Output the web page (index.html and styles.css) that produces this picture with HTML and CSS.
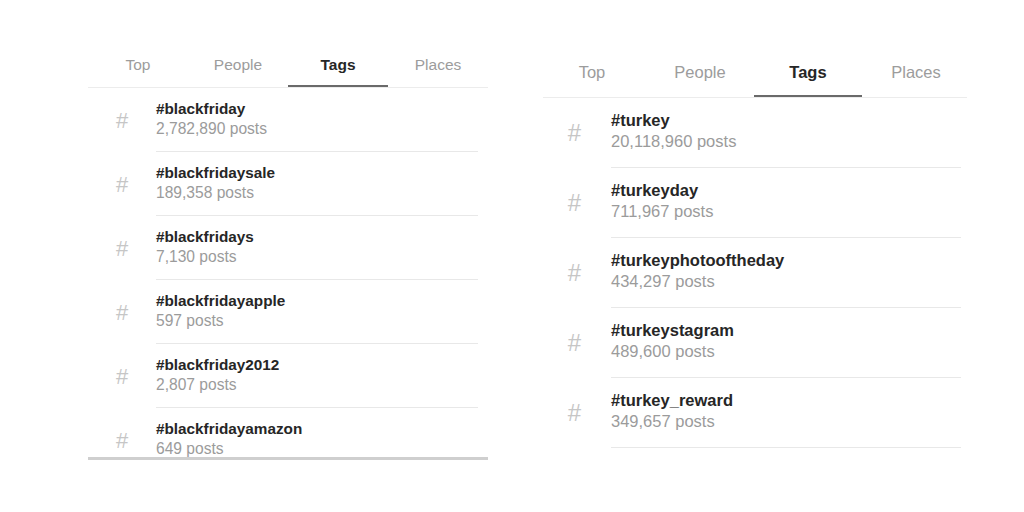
FILE: index.html
```html
<!DOCTYPE html>
<html>
<head>
<meta charset="utf-8">
<link rel="stylesheet" href="styles.css">
</head>
<body>
<div class="page">
  <section class="panel panel-left">
    <nav class="tabs">
      <div class="tab">Top</div>
      <div class="tab">People</div>
      <div class="tab active">Tags</div>
      <div class="tab">Places</div>
    </nav>
    <div class="list">
      <div class="row"><div class="hash">#</div><div class="info"><div class="name">#blackfriday</div><div class="count">2,782,890 posts</div></div></div>
      <div class="row"><div class="hash">#</div><div class="info"><div class="name">#blackfridaysale</div><div class="count">189,358 posts</div></div></div>
      <div class="row"><div class="hash">#</div><div class="info"><div class="name">#blackfridays</div><div class="count">7,130 posts</div></div></div>
      <div class="row"><div class="hash">#</div><div class="info"><div class="name">#blackfridayapple</div><div class="count">597 posts</div></div></div>
      <div class="row"><div class="hash">#</div><div class="info"><div class="name">#blackfriday2012</div><div class="count">2,807 posts</div></div></div>
      <div class="row"><div class="hash">#</div><div class="info"><div class="name">#blackfridayamazon</div><div class="count">649 posts</div></div></div>
    </div>
  </section>
  <section class="panel panel-right">
    <nav class="tabs">
      <div class="tab">Top</div>
      <div class="tab">People</div>
      <div class="tab active">Tags</div>
      <div class="tab">Places</div>
    </nav>
    <div class="list">
      <div class="row"><div class="hash">#</div><div class="info"><div class="name">#turkey</div><div class="count">20,118,960 posts</div></div></div>
      <div class="row"><div class="hash">#</div><div class="info"><div class="name">#turkeyday</div><div class="count">711,967 posts</div></div></div>
      <div class="row"><div class="hash">#</div><div class="info"><div class="name">#turkeyphotooftheday</div><div class="count">434,297 posts</div></div></div>
      <div class="row"><div class="hash">#</div><div class="info"><div class="name">#turkeystagram</div><div class="count">489,600 posts</div></div></div>
      <div class="row"><div class="hash">#</div><div class="info"><div class="name">#turkey_reward</div><div class="count">349,657 posts</div></div></div>
    </div>
  </section>
</div>
</body>
</html>
```
FILE: styles.css
```css
* { box-sizing: border-box; }
html, body {
  margin: 0;
  padding: 0;
  background: #ffffff;
  font-family: "Liberation Sans", Arial, sans-serif;
  color: #262626;
}
.page {
  display: flex;
  align-items: flex-start;
  padding-left: 88px;
  gap: 50px;
  width: 1024px;
  height: 512px;
}
.panel { display: flex; flex-direction: column; }
.tabs {
  display: flex;
  border-bottom: 1px solid #ececec;
}
.tab {
  flex: 1;
  display: flex;
  align-items: center;
  justify-content: center;
  color: #9c9c9c;
}
.tab.active {
  color: #262626;
  font-weight: bold;
  box-shadow: inset 0 -2px 0 #6a6a6a;
}
.row { display: flex; }
.hash {
  display: flex;
  align-items: center;
  justify-content: center;
  color: #c6c6c6;
}
.info {
  flex: 1;
  display: flex;
  flex-direction: column;
  justify-content: center;
  border-bottom: 1px solid #e8e8e8;
}
.name { font-weight: bold; color: #262626; line-height: 20px; }
.count { color: #9b9b9b; line-height: 20px; }

/* left panel */
.panel-left { width: 400px; margin-top: 43px; }
.panel-left .tabs { height: 45px; font-size: 15.5px; }
.panel-left .list {
  height: 372px;
  overflow: hidden;
  border-bottom: 3px solid #cfcfcf;
}
.panel-left .row { height: 64px; }
.panel-left .hash { width: 68px; font-size: 22px; padding-top: 1px; }
.panel-left .info { margin-right: 10px; padding-bottom: 2px; }
.panel-left .name { font-size: 15.3px; }
.panel-left .count { font-size: 15.6px; }

/* right panel */
.panel-right { width: 432px; margin-top: 47px; }
.panel-right .tabs { height: 51px; font-size: 16.5px; margin-left: 5px; margin-right: 3px; }
.panel-right .tabs .tab:first-child { margin-left: -5px; }
.panel-right .tabs .tab:last-child { margin-right: -3px; }
.panel-right .row { height: 70px; }
.panel-right .hash { width: 73px; font-size: 24px; }
.panel-right .info { margin-right: 9px; padding-bottom: 3px; }
.panel-right .name { font-size: 16.5px; line-height: 21px; }
.panel-right .count { font-size: 16.5px; line-height: 21px; }
```
